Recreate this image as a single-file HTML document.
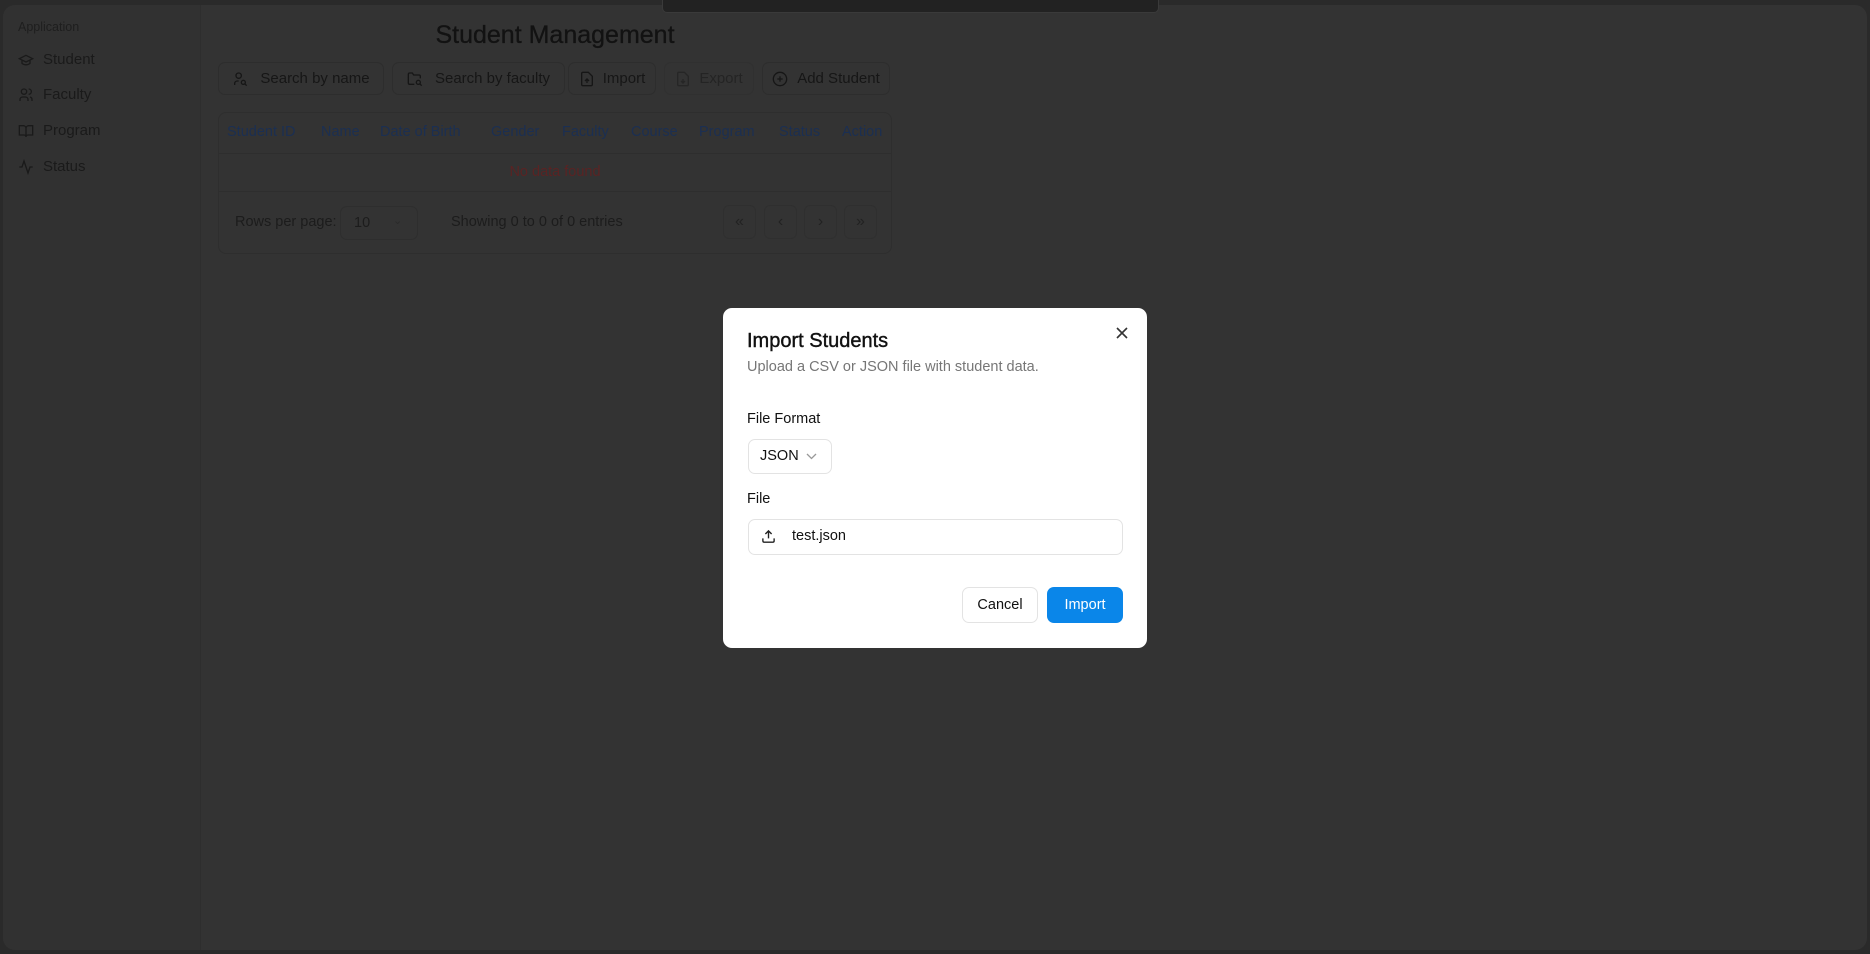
<!DOCTYPE html>
<html><head><meta charset="utf-8"><style>
*{box-sizing:border-box;margin:0;padding:0}
body{width:1870px;height:954px;background:#2a2a2a;font-family:"Liberation Sans",sans-serif;position:relative;overflow:hidden}
.abs{position:absolute}
.inner{left:3px;top:5px;width:1864px;height:945px;background:#333;border-radius:12px;overflow:hidden}
.side{left:3px;top:5px;width:198px;height:945px;background:#313131;border-right:1px solid #2e2e2e;border-radius:12px 0 0 12px}
.nav{left:18px;color:#1a1a1a;font-size:15px;display:flex;align-items:center;gap:9px}
.nav svg{width:16px;height:16px}
.btn{top:62px;height:33px;border:1px solid #2d2d2d;border-radius:7px;color:#161616;font-size:15px;display:flex;align-items:center;justify-content:center;gap:12px}
.btn svg{width:16px;height:16px}
.th{top:124px;font-size:14.5px;color:#1b2f52}
.pb{top:205px;width:33px;height:34px;border:1px solid #2f2f2f;border-radius:6px;color:#222;font-size:16px;display:flex;align-items:center;justify-content:center}
.dlg{left:723px;top:308px;width:424px;height:340px;background:#fff;border-radius:9px}
</style></head><body>
<div class="abs inner"></div>
<div class="abs side"></div>
<div class="abs" style="left:662px;top:0;width:497px;height:13px;background:#222;border:1px solid #3a3a3a;border-top:none;border-radius:0 0 5px 5px"></div>
<div class="abs" style="left:18px;top:20px;font-size:12.5px;color:#1e1e1e">Application</div>
<div class="abs nav" style="top:51px"><svg viewBox="0 0 24 24" fill="none" stroke="#1a1a1a" stroke-width="2"><path d="M22 10 12 5 2 10l10 5 10-5zM6 12v5c3 3 9 3 12 0v-5"/></svg>Student</div>
<div class="abs nav" style="top:86px"><svg viewBox="0 0 24 24" fill="none" stroke="#1a1a1a" stroke-width="2"><circle cx="9" cy="7" r="4"/><path d="M3 21v-2a4 4 0 0 1 4-4h4a4 4 0 0 1 4 4v2M16 3a4 4 0 0 1 0 8M21 21v-2a4 4 0 0 0-3-4"/></svg>Faculty</div>
<div class="abs nav" style="top:122px"><svg viewBox="0 0 24 24" fill="none" stroke="#1a1a1a" stroke-width="2"><path d="M2 4h6a4 4 0 0 1 4 4v13a3 3 0 0 0-3-3H2zM22 4h-6a4 4 0 0 0-4 4v13a3 3 0 0 1 3-3h7z"/></svg>Program</div>
<div class="abs nav" style="top:158px"><svg viewBox="0 0 24 24" fill="none" stroke="#1a1a1a" stroke-width="2"><path d="M22 12h-4l-3 9L9 3l-3 9H2"/></svg>Status</div>
<div class="abs" style="left:355px;width:400px;top:21px;text-align:center;font-size:25px;color:#121212;-webkit-text-stroke:0.3px #121212">Student Management</div>
<div class="abs btn" style="left:218px;width:166px"><svg viewBox="0 0 24 24" fill="none" stroke="#161616" stroke-width="2"><circle cx="10" cy="7" r="4"/><path d="M4 21v-2a4 4 0 0 1 4-4h2"/><circle cx="17" cy="17" r="3"/><path d="m22 22-2.5-2.5"/></svg>Search by name</div>
<div class="abs btn" style="left:392px;width:173px"><svg viewBox="0 0 24 24" fill="none" stroke="#161616" stroke-width="2"><path d="M11 20H4a2 2 0 0 1-2-2V5a2 2 0 0 1 2-2h4l2 3h8a2 2 0 0 1 2 2v3"/><circle cx="17" cy="17" r="3"/><path d="m22 22-2.5-2.5"/></svg>Search by faculty</div>
<div class="abs btn" style="left:568px;width:88px;gap:8px"><svg viewBox="0 0 24 24" fill="none" stroke="#161616" stroke-width="2"><path d="M14 2H6a2 2 0 0 0-2 2v16a2 2 0 0 0 2 2h12a2 2 0 0 0 2-2V8zM12 18v-6M9 15l3-3 3 3"/></svg>Import</div>
<div class="abs btn" style="left:664px;width:90px;gap:8px;color:#242424;border-color:#303030"><svg viewBox="0 0 24 24" fill="none" stroke="#262626" stroke-width="2"><path d="M14 2H6a2 2 0 0 0-2 2v16a2 2 0 0 0 2 2h12a2 2 0 0 0 2-2V8zM12 12v6M9 15l3 3 3-3"/></svg>Export</div>
<div class="abs btn" style="left:762px;width:128px;gap:9px"><svg viewBox="0 0 24 24" fill="none" stroke="#161616" stroke-width="2"><circle cx="12" cy="12" r="10"/><path d="M12 8v8M8 12h8"/></svg>Add Student</div>
<div class="abs" style="left:218px;top:112px;width:674px;height:142px;border:1px solid #2e2e2e;border-radius:8px"></div>
<div class="abs" style="left:219px;top:153px;width:672px;border-top:1px solid #2e2e2e"></div>
<div class="abs" style="left:219px;top:191px;width:672px;border-top:1px solid #2e2e2e"></div>
<div class="abs th" style="left:227px">Student ID</div>
<div class="abs th" style="left:321px">Name</div>
<div class="abs th" style="left:380px">Date of Birth</div>
<div class="abs th" style="left:491px">Gender</div>
<div class="abs th" style="left:562px">Faculty</div>
<div class="abs th" style="left:631px">Course</div>
<div class="abs th" style="left:699px">Program</div>
<div class="abs th" style="left:779px">Status</div>
<div class="abs th" style="left:842px">Action</div>
<div class="abs" style="left:455px;width:200px;top:164px;text-align:center;font-size:14.5px;color:#5a2323">No data found</div>
<div class="abs" style="left:235px;top:214px;font-size:14.5px;color:#1c1c1c">Rows per page:</div>
<div class="abs" style="left:340px;top:206px;width:78px;height:34px;border:1px solid #2e2e2e;border-radius:7px;font-size:14.5px;color:#1c1c1c;padding:8px 0 0 13px">10<span style="position:absolute;left:52px;top:7px;color:#2a2a2a;font-size:11px">&#8964;</span></div>
<div class="abs" style="left:451px;top:214px;font-size:14.5px;color:#1c1c1c">Showing 0 to 0 of 0 entries</div>
<div class="abs pb" style="left:723px">«</div>
<div class="abs pb" style="left:764px">‹</div>
<div class="abs pb" style="left:804px">›</div>
<div class="abs pb" style="left:844px">»</div>

<div class="abs dlg"></div>
<div class="abs" style="left:747px;top:330px;font-size:20px;font-weight:500;color:#111;-webkit-text-stroke:0.4px #111">Import Students</div>
<svg class="abs" style="left:1116px;top:327px" width="12" height="12" viewBox="0 0 12 12" stroke="#333" stroke-width="1.6"><path d="M1 1l10 10M11 1 1 11"/></svg>
<div class="abs" style="left:747px;top:359px;font-size:14.5px;color:#767676">Upload a CSV or JSON file with student data.</div>
<div class="abs" style="left:747px;top:411px;font-size:14.5px;font-weight:500;color:#111">File Format</div>
<div class="abs" style="left:748px;top:439px;width:84px;height:35px;border:1px solid #e3e3e3;border-radius:7px"></div>
<div class="abs" style="left:760px;top:448px;font-size:14.5px;color:#111">JSON</div>
<svg class="abs" style="left:806px;top:453px" width="11" height="7" viewBox="0 0 11 7" fill="none" stroke="#999" stroke-width="1.3"><path d="M1 1l4.5 4.5L10 1"/></svg>
<div class="abs" style="left:747px;top:491px;font-size:14.5px;font-weight:500;color:#111">File</div>
<div class="abs" style="left:748px;top:519px;width:375px;height:36px;border:1px solid #e3e3e3;border-radius:7px"></div>
<svg class="abs" style="left:761px;top:529px" width="15" height="15" viewBox="0 0 24 24" fill="none" stroke="#222" stroke-width="2.2"><path d="M3 15v4a2 2 0 0 0 2 2h14a2 2 0 0 0 2-2v-4M12 3v12M7 8l5-5 5 5"/></svg>
<div class="abs" style="left:792px;top:528px;font-size:14.5px;color:#111">test.json</div>
<div class="abs" style="left:962px;top:587px;width:76px;height:36px;border:1px solid #e3e3e3;border-radius:7px;font-size:14.5px;color:#111;display:flex;align-items:center;justify-content:center">Cancel</div>
<div class="abs" style="left:1047px;top:587px;width:76px;height:36px;background:#0a86e9;border-radius:7px;font-size:14.5px;color:#fff;display:flex;align-items:center;justify-content:center">Import</div>
</body></html>
